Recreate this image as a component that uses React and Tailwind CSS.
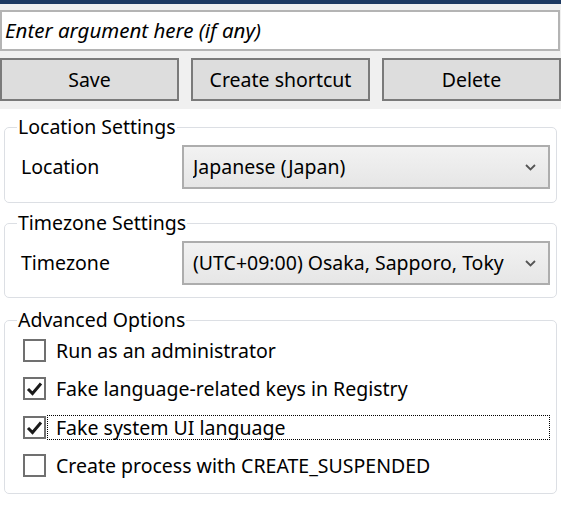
import React from 'react';

const font = { fontFamily: '"Noto Sans", "Open Sans", sans-serif' };

const Chevron = () => (
  <svg width="11" height="7" viewBox="0 0 11 7" className="shrink-0">
    <path d="M1 1 L5.5 5.5 L10 1" fill="none" stroke="#555555" strokeWidth="1.8" />
  </svg>
);

const Combo = ({ value }) => (
  <div className="flex h-[44px] flex-1 items-center border-2 border-[#adadad] bg-gradient-to-b from-[#f2f2f2] to-[#e6e6e6] pl-[9px] pr-[12px]">
    <span className="flex-1 overflow-hidden whitespace-nowrap text-[19.5px] text-black">{value}</span>
    <Chevron />
  </div>
);

const GroupBox = ({ title, children, className = '' }) => (
  <fieldset className={`mx-[4px] rounded-[5px] border border-[#dcdfe4] pl-[16px] pr-[6px] ${className}`}>
    <legend className="-ml-[4px] px-[1px] text-[19.5px] leading-[24px] text-black">{title}</legend>
    {children}
  </fieldset>
);

const Checkbox = ({ checked, label, focused }) => (
  <div className="flex h-[38.5px] items-center">
    <div className="ml-[2px] flex h-[23px] w-[23px] shrink-0 items-center justify-center border-2 border-[#707070] bg-white">
      {checked && (
        <svg width="17" height="15" viewBox="0 0 17 15">
          <path d="M2 8 L6.5 12.5 L15 2.5" fill="none" stroke="#1a1a1a" strokeWidth="3" />
        </svg>
      )}
    </div>
    <span
      className={`ml-[1px] pl-[8px] text-[19.5px] leading-[23px] text-black ${
        focused ? 'flex-1 border border-dotted border-black' : 'border border-transparent'
      }`}
    >
      {label}
    </span>
  </div>
);

export default function App() {
  return (
    <div className="h-[511px] w-[561px] overflow-hidden bg-white" style={font}>
      <div className="bg-[#f0f0f0] pb-[8px]">
        <div className="h-[4px] bg-[#1d3a62]" />
        <div className="mt-[6px] flex h-[41px] w-[560px] items-center border-2 border-[#b4b4b4] bg-white px-[3px]">
          <span className="text-[20.5px] italic text-black">Enter argument here (if any)</span>
        </div>
        <div className="mt-[7px] flex gap-[12px]">
          {['Save', 'Create shortcut', 'Delete'].map((b) => (
            <button
              key={b}
              className="flex h-[43px] flex-1 items-center justify-center border-2 border-[#7a7a7a] bg-[#dddddd] text-[19.5px] text-black"
            >
              {b}
            </button>
          ))}
        </div>
      </div>

      <GroupBox title="Location Settings" className="mt-[6px] pb-[13px] pt-[6px]">
        <div className="flex items-center">
          <span className="w-[161px] text-[19.5px] text-black">Location</span>
          <Combo value="Japanese (Japan)" />
        </div>
      </GroupBox>

      <GroupBox title="Timezone Settings" className="mt-[8px] pb-[12px] pt-[6px]">
        <div className="flex items-center">
          <span className="w-[161px] text-[19.5px] text-black">Timezone</span>
          <Combo value="(UTC+09:00) Osaka, Sapporo, Toky" />
        </div>
      </GroupBox>

      <GroupBox title="Advanced Options" className="mt-[10px] pb-[8px] pt-0">
        <div className="-mt-[1px]">
          <Checkbox label="Run as an administrator" />
          <Checkbox checked label="Fake language-related keys in Registry" />
          <Checkbox checked focused label="Fake system UI language" />
          <Checkbox label="Create process with CREATE_SUSPENDED" />
        </div>
      </GroupBox>
    </div>
  );
}
